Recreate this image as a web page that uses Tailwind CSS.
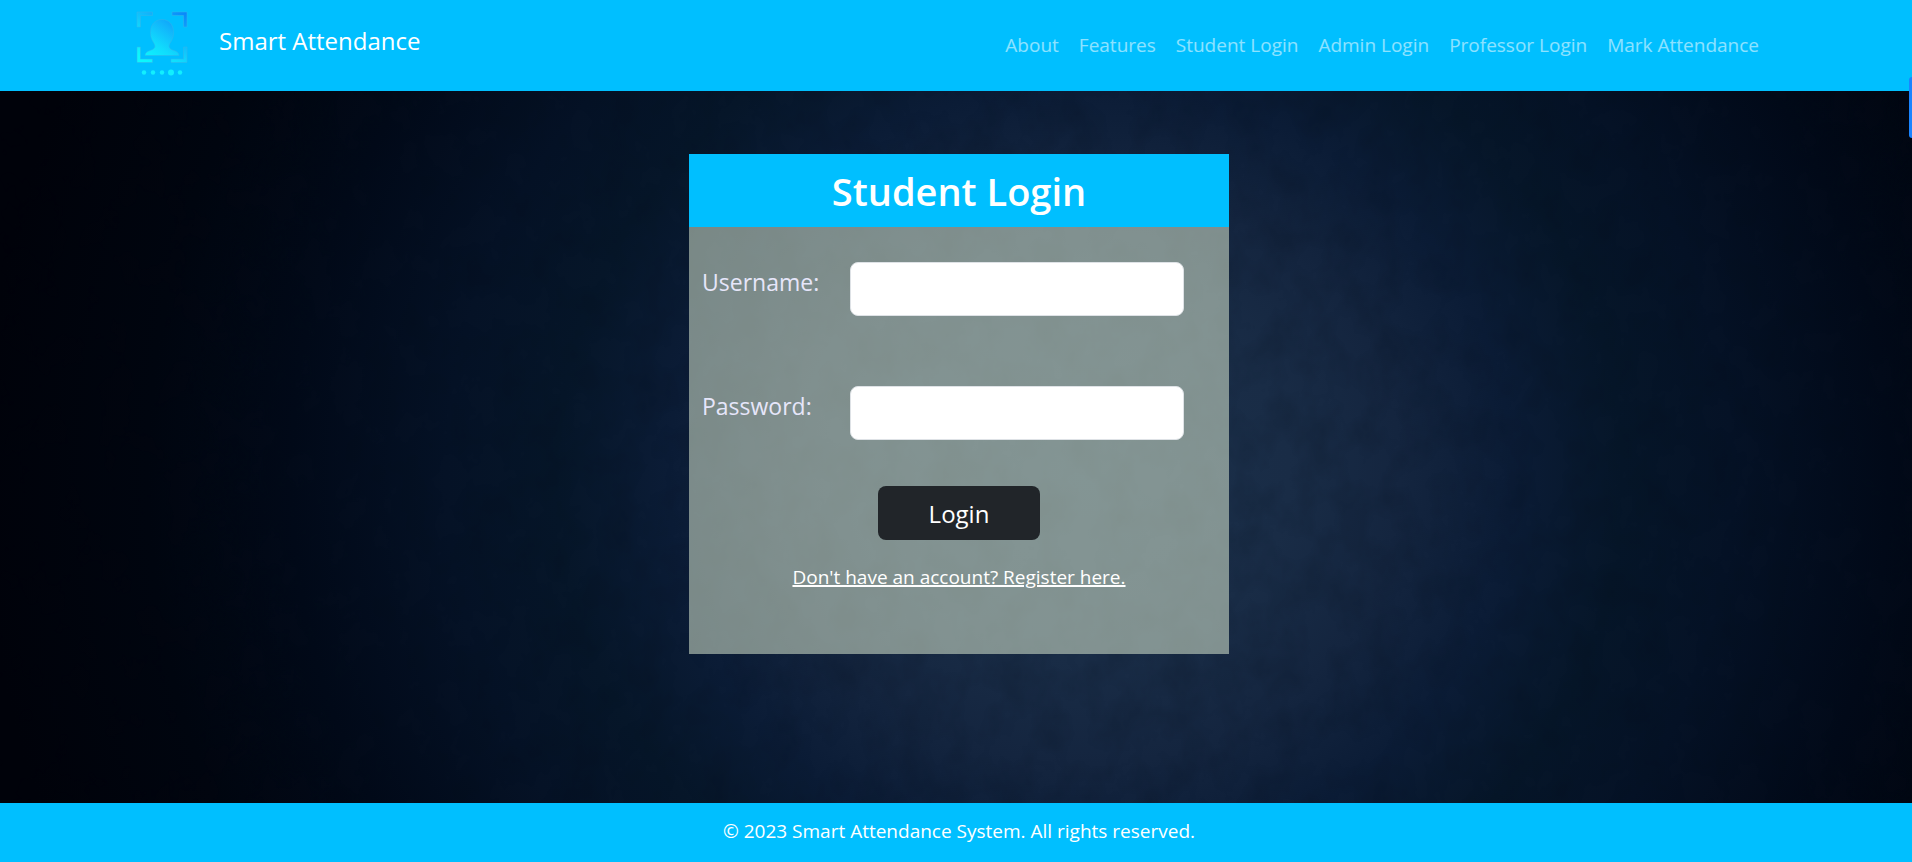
<!DOCTYPE html>
<html lang="en">
<head>
<meta charset="utf-8">
<title>Smart Attendance</title>
<script src="https://cdn.jsdelivr.net/npm/@tailwindcss/browser@4"></script>
</head>
<body class="relative flex min-h-screen flex-col overflow-x-hidden bg-[#00020a] font-['Open_Sans',sans-serif] text-[19px] leading-[30px] text-white">
  <nav class="flex min-h-[91px] items-start justify-between bg-[#00bfff] pr-[143px] pl-[135px]">
    <a href="#" class="flex items-start text-2xl leading-[30px]">
      <svg class="mt-[10px] h-[68px] w-[56px]" viewBox="0 0 56 68" aria-hidden="true">
        <defs>
          <linearGradient id="g" gradientUnits="userSpaceOnUse" x1="54" y1="0" x2="14" y2="54">
            <stop offset="0" stop-color="#0580fa"/><stop offset=".2" stop-color="#0d98fb"/><stop offset=".4" stop-color="#12b4fb"/><stop offset=".7" stop-color="#10dcfd"/><stop offset="1" stop-color="#0cf8fd"/>
          </linearGradient>
        </defs>
        <g fill="url(#g)" stroke="#35b5e8" stroke-width=".5">
          <path d="M2 2H17.500V5.500H5.500V17H2ZM37 2H52V17H48.500V5.500H37ZM2 37H5.500V49H17.500V52.500H2ZM48.500 37H52V52.500H36V49H48.500Z"/>
          <path d="M27 9.500C34 9.500 38.500 14.500 38.500 22.500C38.500 29 36 31 34.500 34.500C33 38 36 39.500 39 40.500C42 41.500 44 43 44 45.500H10C10 43 12 41.500 15 40.500C18 39.500 21 38 19.500 34.500C18 31 15.500 29 15.500 22.500C15.500 14.500 20 9.500 27 9.500Z"/>
        </g>
        <g fill="#12effe"><circle cx="9" cy="62.500" r="2.200"/><circle cx="18" cy="62.500" r="2.200"/><circle cx="27" cy="62.500" r="2.200"/><circle cx="36" cy="62.500" r="3"/><circle cx="45" cy="62.500" r="2.200"/></g>
      </svg>
      <span class="mt-[26px] ml-[28px]">Smart Attendance</span>
    </a>
    <ul class="mt-[30px] flex text-white/55">
      <li><a href="#" class="px-[10px]">About</a></li>
      <li><a href="#" class="px-[10px]">Features</a></li>
      <li><a href="#" class="px-[10px]">Student Login</a></li>
      <li><a href="#" class="px-[10px]">Admin Login</a></li>
      <li><a href="#" class="px-[10px]">Professor Login</a></li>
      <li><a href="#" class="px-[10px]">Mark Attendance</a></li>
    </ul>
  </nav>

  <main class="relative isolate flex grow flex-col items-center bg-[radial-gradient(ellipse_58%_145%_at_57%_54%,#1b304a_0%,#192c46_18%,#14253f_28%,#0b1c36_38%,#061629_48%,#051226_58%,#020a19_72%,#01050f_85%,#00020a_100%)] pt-[63px] pb-[149px] pl-[6px]">
    <svg class="absolute inset-0 -z-10 h-full w-full" aria-hidden="true">
      <filter id="cloth" x="0" y="0" width="100%" height="100%" color-interpolation-filters="sRGB">
        <feTurbulence type="fractalNoise" baseFrequency=".03 .025" numOctaves="4" seed="4"/>
        <feColorMatrix values="0 0 0 0 0  0 0 0 0 .03  0 0 0 0 .07  1.600 0 0 0 -.6"/>
      </filter>
      <rect width="100%" height="100%" filter="url(#cloth)" opacity=".18"/>
    </svg>
    <section class="flex w-[540px] max-w-full flex-col bg-[#ecfadd]/50 pb-[62px]">
      <h1 class="bg-[#00bfff] pt-[13px] pb-[12px] text-center text-[38px] leading-[48px] font-semibold">Student Login</h1>
      <form class="flex flex-col items-center pt-[35px]">
        <div class="flex w-full items-start pr-[45px] pl-[13px]">
          <label for="username" class="w-[148px] pt-[3px] text-[23px] leading-[34px] text-[#e6e6fa]">Username:</label>
          <input id="username" type="text" class="h-[54px] min-w-0 flex-1 rounded-lg border border-[#dee2e6] bg-white px-4 text-black">
        </div>
        <div class="mt-[70px] flex w-full items-start pr-[45px] pl-[13px]">
          <label for="password" class="w-[148px] pt-[3px] text-[23px] leading-[34px] text-[#e6e6fa]">Password:</label>
          <input id="password" type="password" class="h-[54px] min-w-0 flex-1 rounded-lg border border-[#dee2e6] bg-white px-4 text-black">
        </div>
        <button type="submit" class="mt-[46px] h-[54px] w-[162px] rounded-lg bg-[#212529] pt-[2px] text-2xl">Login</button>
        <a href="#" class="mt-[22px] underline decoration-2">Don't have an account? Register here.</a>
      </form>
    </section>
    <button type="button" aria-label="Open side panel" class="absolute -top-[14px] right-0 h-[61px] w-[3px] rounded-l-lg bg-[#1a84ff]"></button>
  </main>

  <footer class="bg-[#00bfff] pt-[13px] pb-[16px] pl-[6px] text-center">© 2023 Smart Attendance System. All rights reserved.</footer>
</body>
</html>
